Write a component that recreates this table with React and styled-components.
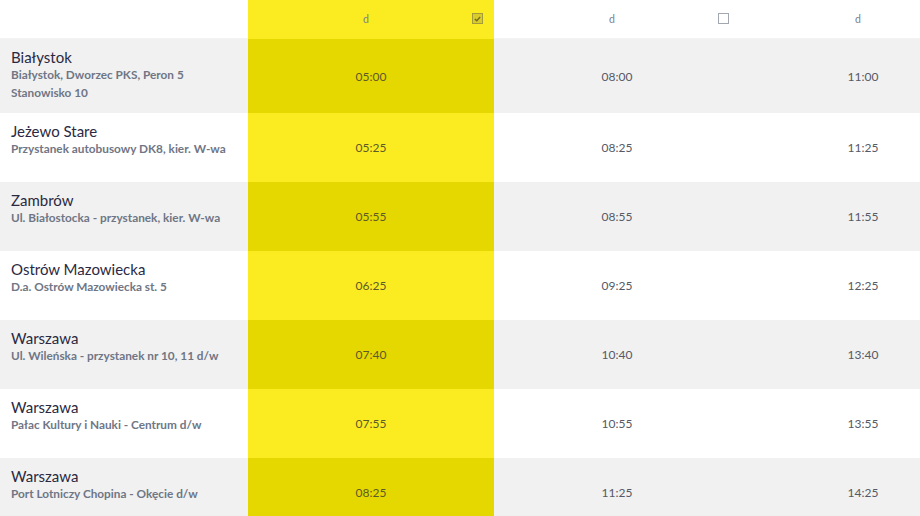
import styled, { createGlobalStyle } from "styled-components";

const Global = createGlobalStyle`
  html, body {
    margin: 0;
    padding: 0;
    overflow: hidden;
    background: #ffffff;
    font-family: Lato, "Noto Sans", sans-serif;
  }
`;

const TABLE = styled.div`
  display: grid;
  grid-template-columns: 248px 246px 246px 246px;
  width: 986px;
`;

const HEADCELL = styled.div`
  position: relative;
  height: 39px;
  display: flex;
  align-items: center;
  justify-content: center;
  padding-right: 10px;
  box-sizing: border-box;
  font-size: 10.5px;
  color: #7b8190;
  background-color: ${(p) => (p.$active ? "#fbec21" : "#ffffff")};
  border-bottom: 1px solid ${(p) => (p.$active ? "#fbec21" : "#f3f3f3")};
`;

const BOX = styled.span`
  position: absolute;
  right: 11px;
  top: 13px;
  width: 9px;
  height: 9px;
  border: 1.5px solid ${(p) => (p.$checked ? "#a49c3a" : "#a3a7b0")};
  background-color: ${(p) => (p.$checked ? "#d9cc2a" : "#ffffff")};
  display: flex;
  align-items: center;
  justify-content: center;
`;

const STOPCELL = styled.div`
  min-height: 69px;
  padding: 10px 11px 11px;
  box-sizing: border-box;
  background-color: ${(p) => (p.$even ? "#f1f1f1" : "#ffffff")};
`;

const NAME = styled.div`
  font-size: 15px;
  line-height: 17px;
  color: #2b2942;
`;

const SUB = styled.div`
  font-size: 11.8px;
  font-weight: 700;
  line-height: 18px;
  color: #6f7685;
`;

const TIMECELL = styled.div`
  display: flex;
  align-items: center;
  justify-content: center;
  font-size: 12px;
  color: ${(p) => (p.$active ? "#5c5a2a" : "#555a66")};
  background-color: ${(p) =>
    p.$active
      ? p.$even
        ? "#e5d800"
        : "#fbec21"
      : p.$even
      ? "#f1f1f1"
      : "#ffffff"};
`;

const stops = [
  { name: "Białystok", sub: ["Białystok, Dworzec PKS, Peron 5", "Stanowisko 10"], times: ["05:00", "08:00", "11:00"] },
  { name: "Jeżewo Stare", sub: ["Przystanek autobusowy DK8, kier. W-wa"], times: ["05:25", "08:25", "11:25"] },
  { name: "Zambrów", sub: ["Ul. Białostocka - przystanek, kier. W-wa"], times: ["05:55", "08:55", "11:55"] },
  { name: "Ostrów Mazowiecka", sub: ["D.a. Ostrów Mazowiecka st. 5"], times: ["06:25", "09:25", "12:25"] },
  { name: "Warszawa", sub: ["Ul. Wileńska - przystanek nr 10, 11 d/w"], times: ["07:40", "10:40", "13:40"] },
  { name: "Warszawa", sub: ["Pałac Kultury i Nauki - Centrum d/w"], times: ["07:55", "10:55", "13:55"] },
  { name: "Warszawa", sub: ["Port Lotniczy Chopina - Okęcie d/w"], times: ["08:25", "11:25", "14:25"] },
];

const courses = [
  { active: true, box: "checked" },
  { active: false, box: "empty" },
  { active: false, box: null },
];

function Check() {
  return (
    <svg width="7" height="6" viewBox="0 0 7 6">
      <path d="M0.8 3 L2.7 4.8 L6.2 1" fill="none" stroke="#6f6a1e" strokeWidth="1.3" />
    </svg>
  );
}

export default function App() {
  return (
    <>
      <Global />
      <TABLE>
        <HEADCELL />
        {courses.map((c, i) => (
          <HEADCELL key={i} $active={c.active}>
            d
            {c.box && (
              <BOX $checked={c.box === "checked"}>
                {c.box === "checked" && <Check />}
              </BOX>
            )}
          </HEADCELL>
        ))}
        {stops.map((s, r) => {
          const even = r % 2 === 0;
          return [
            <STOPCELL key={`s${r}`} $even={even}>
              <NAME>{s.name}</NAME>
              {s.sub.map((line) => (
                <SUB key={line}>{line}</SUB>
              ))}
            </STOPCELL>,
            ...s.times.map((t, i) => (
              <TIMECELL key={`t${r}-${i}`} $even={even} $active={courses[i].active}>
                {t}
              </TIMECELL>
            )),
          ];
        })}
      </TABLE>
    </>
  );
}
